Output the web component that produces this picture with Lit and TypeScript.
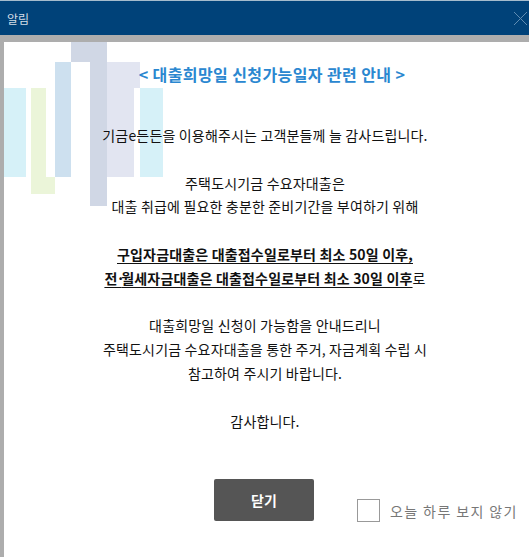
import { LitElement, html, css, svg } from "lit";
import { customElement } from "lit/decorators.js";

@customElement("app-root")
export class AppRoot extends LitElement {
  static styles = css`
    :host { display: block; width: 529px; height: 557px; overflow: hidden; background: #fff; font-family: "Noto Sans CJK KR", "Liberation Sans", sans-serif; }
    .titlebar { height: 34px; border-top: 1px solid #a5bccd; background: #004279; display: flex; align-items: center; justify-content: space-between; color: #d4dde6; font-size: 12px; padding-left: 7px; }
    .x { width: 15px; height: 15px; margin-right: 1px; display: block; }
    .frame { height: 522px; box-sizing: border-box; border-top: 7px solid #adadad; border-left: 4px solid #adadad; position: relative; background: #fff; }
    .art { position: absolute; left: 0; top: 0; width: 160px; height: 165px; }
    .content { position: relative; display: flex; flex-direction: column; align-items: center; padding-right: 3px; color: #111; font-size: 14px; letter-spacing: 0.17px; }
    .title { margin: 20px 0 0 14px; color: #2a87d0; font-size: 16px; font-weight: 700; line-height: 24px; letter-spacing: 0.4px; }
    .line { line-height: 23.8px; white-space: pre; text-align: center; }
    .first { margin-top: 38px; }
    .gap { margin-top: 23.8px; }
    .strong { font-weight: 700; }
    .strong u, u.strong { text-underline-offset: 3px; }
    .dot { letter-spacing: -3.5px; margin-left: -1px; }
    .footer { display: flex; align-items: flex-start; align-self: flex-start; margin-top: 46px; margin-left: 210px; }
    .close { width: 100px; height: 42px; background: #555; color: #fff; border: 0; border-radius: 2px; font-family: inherit; font-size: 14px; font-weight: 700; padding: 0; }
    .check { display: flex; align-items: center; margin: 20px 0 0 43px; color: #777; font-size: 14px; letter-spacing: 1.4px; white-space: nowrap; }
    .box { width: 21px; height: 21px; border: 1px solid #999; margin-right: 10px; }
  `;

  render() {
    const r = (x: number, y: number, w: number, h: number, f: string) =>
      svg`<rect x=${x} y=${y} width=${w} height=${h} fill=${f} />`;
    return html`
      <div class="titlebar">
        <span>알림</span>
        <svg class="x" viewBox="0 0 15 15"><path d="M1 1L14 14M14 1L1 14" stroke="#5f8cb2" stroke-width="1" fill="none" /></svg>
      </div>
      <div class="frame">
        <svg class="art" viewBox="0 0 160 165">
          ${r(0, 46, 22, 89, "#d6f1f8")}
          ${r(27, 46, 15, 106, "#ebf5d9")}
          ${r(42, 135, 9, 17, "#ebf5d9")}
          ${r(51, 20, 16, 115, "#cde0ef")}
          ${r(67, 0, 36, 20, "#d0d7e5")}
          ${r(86, 20, 17, 144, "#d0d7e5")}
          ${r(103, 20, 33, 26, "#e2e5f1")}
          ${r(103, 46, 27, 89, "#e2e5f1")}
          ${r(136, 46, 23, 89, "#d6f1f8")}
        </svg>
        <div class="content">
          <h1 class="title">&lt; 대출희망일 신청가능일자 관련 안내 &gt;</h1>
          <div class="line first">기금e든든을 이용해주시는 고객분들께 늘 감사드립니다.</div>
          <div class="line gap">주택도시기금 수요자대출은</div>
          <div class="line">대출 취급에 필요한 충분한 준비기간을 부여하기 위해</div>
          <div class="line gap strong"><u>구입자금대출은 대출접수일로부터 최소 50일 이후,</u></div>
          <div class="line"><u class="strong">전<span class="dot">·</span>월세자금대출은 대출접수일로부터 최소 30일 이후</u>로</div>
          <div class="line gap">대출희망일 신청이 가능함을 안내드리니</div>
          <div class="line">주택도시기금 수요자대출을 통한 주거, 자금계획 수립 시</div>
          <div class="line">참고하여 주시기 바랍니다.</div>
          <div class="line gap">감사합니다.</div>
          <div class="footer">
            <button class="close">닫기</button>
            <div class="check"><span class="box"></span><span>오늘 하루 보지 않기</span></div>
          </div>
        </div>
      </div>
    `;
  }
}
